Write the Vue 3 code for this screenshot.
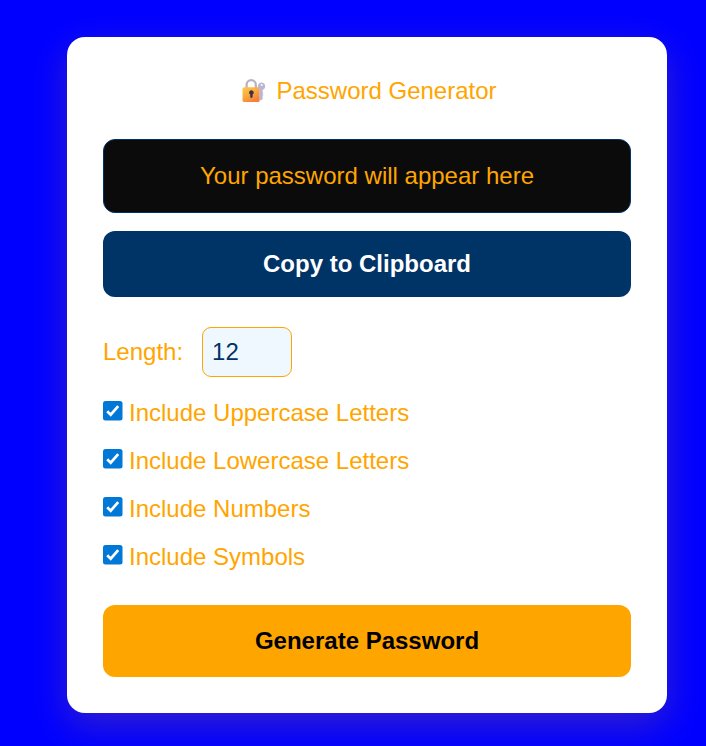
<script setup>
import { ref } from 'vue'

const length = ref(12)
const password = ref('')
const options = ref([
  { label: 'Include Uppercase Letters', chars: 'ABCDEFGHIJKLMNOPQRSTUVWXYZ', on: true },
  { label: 'Include Lowercase Letters', chars: 'abcdefghijklmnopqrstuvwxyz', on: true },
  { label: 'Include Numbers', chars: '0123456789', on: true },
  { label: 'Include Symbols', chars: '!@#$%^&*()_+-=', on: true }
])

function generate() {
  const pool = options.value.filter((o) => o.on).map((o) => o.chars).join('')
  let out = ''
  for (let i = 0; pool && i < length.value; i++) {
    out += pool[Math.floor(Math.random() * pool.length)]
  }
  password.value = out
}

function copy() {
  if (password.value) navigator.clipboard.writeText(password.value)
}
</script>

<template>
  <main class="page">
    <section class="card">
      <h1 class="title">
        <svg class="lock" viewBox="0 0 24 26" aria-hidden="true">
          <defs>
            <linearGradient id="lockBody" x1="0" y1="0" x2="0.6" y2="1">
              <stop offset="0" stop-color="#ffc94d" />
              <stop offset="0.5" stop-color="#fbac3c" />
              <stop offset="1" stop-color="#f4803a" />
            </linearGradient>
          </defs>
          <path d="M4.6 10V6.8a4.6 4.6 0 0 1 9.2 0V10" fill="none" stroke="#b9b3c0" stroke-width="2.3" />
          <rect x="0.5" y="9.2" width="17.2" height="14.8" rx="1.6" fill="url(#lockBody)" />
          <path d="M9.4 12.3a2.3 2.3 0 0 0-1.2 4.3v2.7q1.2 1 2.4 0v-2.7A2.3 2.3 0 0 0 9.4 12.3z" fill="#40304a" />
          <path
            d="M19.6 4.6a3.7 3.7 0 0 0-2.1 6.8v9.6l1.4 1.5 1.7-1.6v-9.1A3.7 3.7 0 0 0 19.6 4.6zm.1 1.5a1 1 0 1 1 0 2 1 1 0 0 1 0-2z"
            fill="#bdb4d0"
            fill-rule="evenodd"
          />
          <path d="M20.4 14.2l1.2.9-1.2 1 1.2 1-1.2 1z" fill="#bdb4d0" />
        </svg>
        <span>Password Generator</span>
      </h1>

      <div class="output">{{ password || 'Your password will appear here' }}</div>
      <button class="copy" type="button" @click="copy">Copy to Clipboard</button>

      <label class="length">
        <span>Length:</span>
        <input v-model.number="length" class="number" type="number" min="4" max="32" />
      </label>

      <div class="options">
        <label v-for="option in options" :key="option.label" class="option">
          <input v-model="option.on" class="native" type="checkbox" />
          <svg class="box" viewBox="0 0 20 20" aria-hidden="true">
            <rect class="box-fill" x="0" y="0" width="19.5" height="19.5" rx="2.5" />
            <path v-if="option.on" class="tick" d="M4.2 10.2l3.5 3.5 7.5-8.6" />
          </svg>
          <span>{{ option.label }}</span>
        </label>
      </div>

      <button class="generate" type="button" @click="generate">Generate Password</button>
    </section>
  </main>
</template>

<style>
body {
  margin: 0;
  background: #0000ff;
}
</style>

<style scoped>
.page {
  box-sizing: border-box;
  height: 746px;
  padding: 37px 39px 33px 67px;
  overflow: hidden;
  background: #0000ff;
  color: #ffa500;
  font: 24px/28px "Liberation Sans", Arial, sans-serif;
}
.card {
  box-sizing: border-box;
  display: flex;
  flex-direction: column;
  width: 600px;
  height: 676px;
  padding: 36px;
  border-radius: 18px;
  background: #fff;
  box-shadow: 0 12px 36px rgba(255, 165, 0, 0.2);
}
.title {
  display: flex;
  justify-content: center;
  gap: 10px;
  height: 36px;
  margin: 0 0 30px;
  padding-left: 5px;
  font-size: 24px;
  font-weight: 400;
  line-height: 36px;
}
.lock {
  width: 24px;
  height: 26px;
  margin-top: 5px;
}
.output {
  box-sizing: border-box;
  height: 74px;
  border: 1px solid #003366;
  border-radius: 12px;
  background: #0b0b0b;
  line-height: 72px;
  text-align: center;
}
.copy,
.generate {
  padding: 0;
  border: 0;
  border-radius: 12px;
  font: inherit;
  font-weight: 700;
  cursor: pointer;
}
.copy {
  height: 66px;
  margin-top: 18px;
  background: #003366;
  color: #fff;
}
.length {
  display: flex;
  align-items: center;
  gap: 19px;
  margin-top: 30px;
}
.number {
  box-sizing: border-box;
  width: 90px;
  height: 50px;
  padding: 0 10px 0 9px;
  border: 1px solid #ffa500;
  border-radius: 9px;
  background: #f0f8ff;
  color: #003366;
  font: inherit;
  appearance: textfield;
}
.options {
  display: flex;
  flex-direction: column;
  gap: 12px;
  margin-top: 18px;
}
.option {
  display: flex;
  align-items: center;
  height: 36px;
}
.native {
  position: absolute;
  opacity: 0;
  pointer-events: none;
}
.box {
  width: 20px;
  height: 20px;
  margin: 0 6px 4px 0;
}
.box-fill {
  fill: #0078d7;
}
.tick {
  fill: none;
  stroke: #fff;
  stroke-width: 2.7;
}
.generate {
  height: 72px;
  margin-top: 30px;
  background: #ffa500;
  color: #000;
}
</style>
